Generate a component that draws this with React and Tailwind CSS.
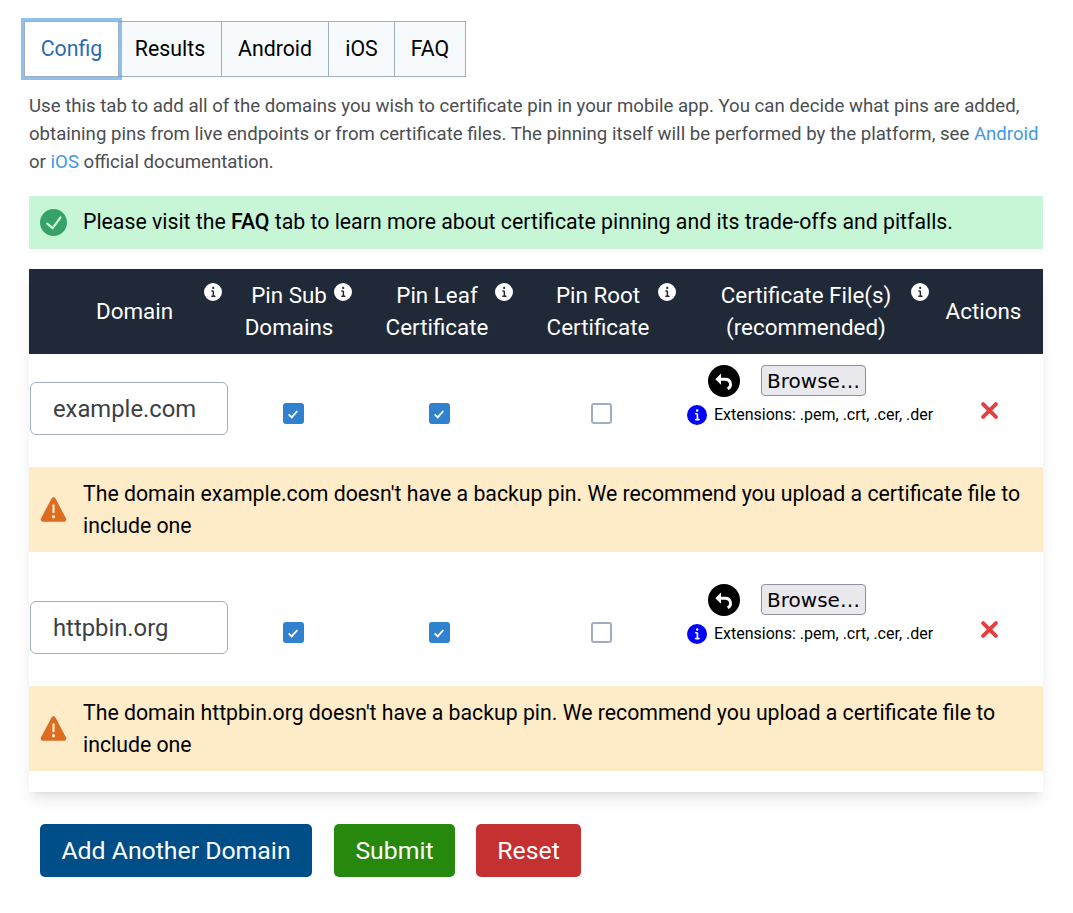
import React from "react";

const CHECK_CIRCLE = "M12,0A12,12,0,1,0,24,12,12.014,12.014,0,0,0,12,0Zm6.927,8.2-6.845,9.289a1.011,1.011,0,0,1-1.43.188L5.764,13.769a1,1,0,1,1,1.25-1.562l4.076,3.261,6.227-8.451A1,1,0,1,1,18.927,8.2Z";
const WARNING = "M23.119,20,13.772,2.15h0a2,2,0,0,0-3.543,0L.881,20a2,2,0,0,0,1.772,2.928H21.347A2,2,0,0,0,23.119,20ZM11,8.423a1,1,0,0,1,2,0v6a1,1,0,1,1-2,0Zm1.05,11.51h-.028a1.528,1.528,0,0,1-1.522-1.47,1.476,1.476,0,0,1,1.448-1.53h.028A1.527,1.527,0,0,1,13.5,18.4,1.475,1.475,0,0,1,12.05,19.933Z";
const INFO = "M12,0A12,12,0,1,0,24,12,12.013,12.013,0,0,0,12,0Zm.25,5a1.5,1.5,0,1,1-1.5,1.5A1.5,1.5,0,0,1,12.25,5ZM14.5,18.5h-4a1,1,0,0,1,0-2h.75a.25.25,0,0,0,.25-.25v-4.5a.25.25,0,0,0-.25-.25H10.5a1,1,0,0,1,0-2h1a2,2,0,0,1,2,2v4.75a.25.25,0,0,0,.25.25h.75a1,1,0,1,1,0,2Z";

const GRID = "grid grid-cols-[211px_98px_198px_124px_292px_91px]";

const Icon = ({ d, className }) => (
  <svg viewBox="0 0 24 24" className={className} fill="currentColor">
    <path d={d} />
  </svg>
);

const Tab = ({ label, active, width }) => (
  <button
    className={`h-[56px] border border-[#a0aec0] -ml-px text-[21.3px] first:ml-0 ${width} ${
      active ? "relative z-10 bg-white text-[#2b6cb0] shadow-[0_0_0_3px_rgba(66,153,225,0.6)]" : "bg-[#f7fafc] text-black"
    }`}
  >
    {label}
  </button>
);

const HeadCell = ({ lines, iconClass }) => (
  <div className="relative flex flex-col justify-center items-center text-center pb-[2px]">
    {lines.map((l) => (
      <span key={l} className="whitespace-nowrap">{l}</span>
    ))}
    {iconClass && <Icon d={INFO} className={`absolute top-[14px] w-[18px] h-[18px] text-white ${iconClass}`} />}
  </div>
);

const Checkbox = ({ checked, className }) => (
  <div className={`flex justify-center mt-[38px] ${className}`}>
    {checked ? (
      <span className="w-[21px] h-[21px] rounded-[3px] bg-[#3182ce] flex items-center justify-center">
        <svg viewBox="0 0 14 14" className="w-[12px] h-[12px] text-white" fill="none" stroke="currentColor" strokeWidth="2.2">
          <path d="M2 7.5 L5.5 11 L12 3.5" />
        </svg>
      </span>
    ) : (
      <span className="w-[21px] h-[21px] rounded-[3px] bg-white border-2 border-[#a0aec0]" />
    )}
  </div>
);

const DomainRow = ({ domain, first }) => (
  <>
    <div className={`${GRID} ${first ? "pt-[11px]" : "pt-[32px]"} pb-[32px]`}>
      <div className="mt-[17px] pl-px">
        <div className="w-[198px] h-[53px] rounded-md border border-[#a0aec0] bg-white pl-[22px] pt-[2px] flex items-center text-[23.8px] text-[#3c3f44]">
          {domain}
        </div>
      </div>
      <Checkbox checked className="pl-2" />
      <Checkbox checked className="pl-1" />
      <Checkbox className="pl-1.5" />
      <div className="pl-[27px]">
        <div className="flex items-start h-[32px]">
          <span className="ml-[21px] w-[32px] h-[32px] rounded-full bg-black flex items-center justify-center">
            <svg viewBox="0 0 20 20" className="w-[24px] h-[24px]" fill="none" stroke="white" strokeWidth="2.4">
              <path d="M6 8.5 H11 A4.2 4.2 0 0 1 13 16.5" />
              <path d="M7.5 3.8 L2.8 8.5 L7.5 13.2 Z" fill="white" stroke="none" />
            </svg>
          </span>
          <button className="ml-[21px] w-[105px] h-[31px] rounded-[4px] border border-[#8f8f9d] bg-[#e9e9ed] text-[20px] text-black font-['DejaVu_Sans',sans-serif] flex items-center justify-center">
            Browse…
          </button>
        </div>
        <div className="flex items-center mt-[8px] h-[20px]">
          <Icon d={INFO} className="w-[20px] h-[20px] text-[#0000ff] shrink-0" />
          <span className="ml-[7px] text-[16px] text-black whitespace-nowrap">Extensions: .pem, .crt, .cer, .der</span>
        </div>
      </div>
      <div className="flex justify-center mt-[37px] pr-[16px]">
        <svg viewBox="0 0 16 16" className="w-[17px] h-[17px] text-[#e53e3e]" fill="none" stroke="currentColor" strokeWidth="3.6" strokeLinecap="round">
          <path d="M2 2 L14 14 M14 2 L2 14" />
        </svg>
      </div>
    </div>
    <div className="bg-[#feebc8] flex items-center h-[85px] pl-[11px] pr-[12px]">
      <Icon d={WARNING} className="w-[27px] h-[27px] text-[#dd6b20] shrink-0" />
      <p className="ml-[16px] text-[21.28px] leading-[31.5px] text-black">
        The domain {domain} doesn't have a backup pin. We recommend you upload a certificate file to include one
      </p>
    </div>
  </>
);

export default function App() {
  return (
    <div className="pl-[29px] pr-[30px] pt-[21px] pb-[36px] bg-white font-['Roboto',sans-serif]">
      {/* Tabs */}
      <div className="flex -ml-[5px]">
        <Tab label="Config" active width="w-[95px]" />
        <Tab label="Results" width="w-[104px]" />
        <Tab label="Android" width="w-[108px]" />
        <Tab label="iOS" width="w-[67px]" />
        <Tab label="FAQ" width="w-[72px]" />
      </div>

      <p className="mt-[15px] text-[18.62px] leading-[28px] text-[#4a4d52]">
        Use this tab to add all of the domains you wish to certificate pin in your mobile app. You can decide what pins are added, obtaining pins from live endpoints or from certificate files. The pinning itself will be performed by the platform, see{" "}
        <a className="text-[#4299e1]">Android</a> or <a className="text-[#4299e1]">iOS</a> official documentation.
      </p>

      <div className="mt-[20px] h-[53px] bg-[#c6f6d5] flex items-center pl-[11px]">
        <Icon d={CHECK_CIRCLE} className="w-[27px] h-[27px] text-[#38a169] shrink-0" />
        <p className="ml-[16px] -mt-[2px] text-[21.28px] text-black">
          Please visit the <span className="font-medium">FAQ</span> tab to learn more about certificate pinning and its trade-offs and pitfalls.
        </p>
      </div>

      {/* Domain table */}
      <div className="mt-[20px] shadow-lg">
        <div className={`${GRID} h-[85px] bg-[#1f2937] text-white text-[22.4px] leading-[32px]`}>
          <HeadCell lines={["Domain"]} iconClass="left-[175px]" />
          <HeadCell lines={["Pin Sub", "Domains"]} iconClass="left-[94px]" />
          <HeadCell lines={["Pin Leaf", "Certificate"]} iconClass="left-[157px]" />
          <HeadCell lines={["Pin Root", "Certificate"]} iconClass="left-[122px]" />
          <HeadCell lines={["Certificate File(s)", "(recommended)"]} iconClass="left-[251px]" />
          <div className="flex items-center justify-center pr-[28px] pb-[2px]">Actions</div>
        </div>
        <DomainRow domain="example.com" first />
        <DomainRow domain="httpbin.org" />
        <div className="h-[21px] bg-white" />
      </div>

      {/* Buttons */}
      <div className="flex mt-[32px] pl-[11px] text-[24.8px] text-white">
        <button className="h-[53px] w-[272px] rounded-[5px] bg-[#004e87]">Add Another Domain</button>
        <button className="ml-[22px] h-[53px] w-[121px] rounded-[5px] bg-[#26890d]">Submit</button>
        <button className="ml-[21px] h-[53px] w-[105px] rounded-[5px] bg-[#c53030]">Reset</button>
      </div>
    </div>
  );
}
